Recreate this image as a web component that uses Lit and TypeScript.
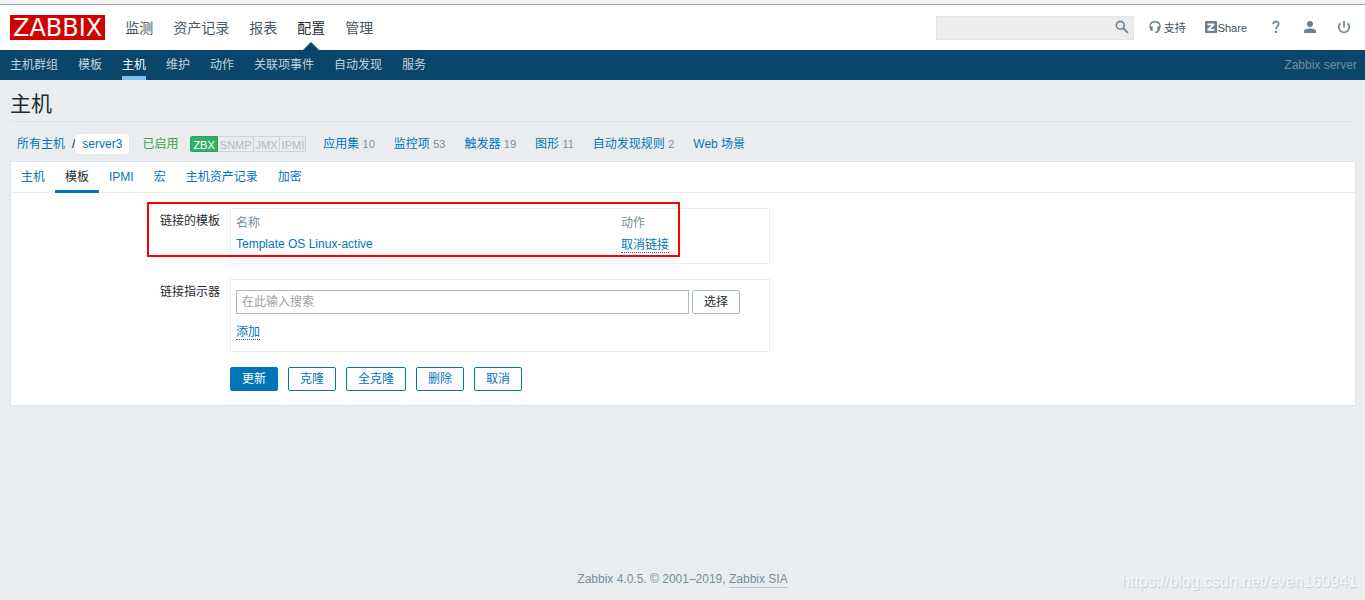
import { LitElement, html, css, svg, nothing } from 'lit';
import { customElement } from 'lit/decorators.js';
import { classMap } from 'lit/directives/class-map.js';

const MENU = ['监测', '资产记录', '报表', '配置', '管理'];
const SUBMENU = ['主机群组', '模板', '主机', '维护', '动作', '关联项事件', '自动发现', '服务'];
const TABS = ['主机', '模板', 'IPMI', '宏', '主机资产记录', '加密'];
const INTERFACES = ['ZBX', 'SNMP', 'JMX', 'IPMI'];
const ENTITIES: { label: string; count?: number }[] = [
  { label: '应用集', count: 10 },
  { label: '监控项', count: 53 },
  { label: '触发器', count: 19 },
  { label: '图形', count: 11 },
  { label: '自动发现规则', count: 2 },
  { label: 'Web 场景' },
];
const ACTIONS = ['更新', '克隆', '全克隆', '删除', '取消'];

const icon = (size: number, body: unknown) => html`
  <svg width=${size} height=${size} viewBox="0 0 14 14" aria-hidden="true">${body}</svg>
`;

const searchIcon = icon(14, svg`
  <circle cx="5.3" cy="5.3" r="3.9" fill="none" stroke="currentColor" stroke-width="1.6"/>
  <path d="M8.2 8.2 L12.8 12.8" stroke="currentColor" stroke-width="1.9"/>`);
const supportIcon = icon(14, svg`
  <path d="M3.2 9.6 C0.6 6.4 2 1.7 7 1.7 C12 1.7 13.4 6.4 10.8 9.6" fill="none" stroke="currentColor" stroke-width="1.4"/>
  <path d="M2 6.6 H4.6 V11 H3.6 L2 9.2 Z M12 6.6 H9.4 V11 H10.4 L12 9.2 Z" fill="currentColor"/>
  <path d="M10.8 10 C10.4 11.8 9.4 12.4 7.2 12.4" fill="none" stroke="currentColor" stroke-width="1.3"/>`);
const shareIcon = icon(12, svg`
  <rect width="14" height="14" rx="1" fill="currentColor"/>
  <path d="M3 2.8 H11 V4.8 L6.4 9.2 H11.2 V11.3 H2.9 V9.3 L7.5 4.9 H3 Z" fill="#fff"/>`);
const helpIcon = icon(14, svg`
  <path d="M4.2 4.2 C4.3 0.7 9.7 0.7 9.7 4 C9.7 6.2 7 6.4 7 9" fill="none" stroke="currentColor" stroke-width="1.7"/>
  <rect x="6" y="10.8" width="2" height="2.2" fill="currentColor"/>`);
const userIcon = icon(14, svg`
  <circle cx="7" cy="4" r="3" fill="currentColor"/>
  <path d="M1 13 V11.4 C1 9.4 4 8.6 7 8.6 C10 8.6 13 9.4 13 11.4 V13 Z" fill="currentColor"/>`);
const powerIcon = icon(14, svg`
  <path d="M7 1 V7.4" stroke="currentColor" stroke-width="1.7"/>
  <path d="M3.4 3.1 A5.3 5.3 0 1 0 10.6 3.1" fill="none" stroke="currentColor" stroke-width="1.6"/>`);

@customElement('app-root')
export class AppRoot extends LitElement {
  static styles = css`
    :host {
      display: flex;
      flex-direction: column;
      position: relative;
      box-sizing: border-box;
      min-height: 100vh;
      background: #e9edf0;
      color: #1f2c33;
      font: 12px/16px "Liberation Sans", "Noto Sans CJK SC", sans-serif;
    }
    * { box-sizing: border-box; }
    a { color: #0275b8; text-decoration: none; white-space: nowrap; }
    svg { display: block; flex: none; }
    button, input { font: inherit; margin: 0; }

    .edge { height: 5px; background: #f2f2f2; border-bottom: 1px solid #a4a4a4; }

    .top {
      display: flex;
      align-items: center;
      height: 45px;
      padding: 0 14px 0 10px;
      background: #fff;
    }
    .logo {
      height: 25px;
      padding: 0 3px;
      background: #d40000;
      color: #fff;
      font: 24px/27px "DejaVu Sans", sans-serif;
    }
    .menu { display: flex; align-self: stretch; gap: 20px; margin-left: 20px; }
    .menu a {
      display: flex;
      align-items: center;
      position: relative;
      color: #4a5862;
      font-size: 14px;
    }
    .menu .active { color: #1f2c33; }
    .menu .active::after {
      content: "";
      position: absolute;
      bottom: 0;
      left: calc(50% - 8px);
      border: 8px solid transparent;
      border-top: 0;
      border-bottom-color: #0a466a;
    }
    .tools { display: flex; align-items: center; margin-left: auto; color: #6b8090; }
    .tools a { display: flex; align-items: center; color: #6b8090; font-size: 11px; }
    .tools svg { margin-bottom: 2px; }
    .tools span { color: #425059; }
    .search {
      display: flex;
      width: 198px;
      height: 24px;
      margin-right: 14px;
      border: 1px solid #e2e5e7;
      background: #ececec;
    }
    .search input { flex: 1; min-width: 0; border: 0; padding: 0 5px; background: none; outline: 0; }
    .search button { width: 20px; padding: 0 0 0 2px; border: 0; background: none; color: #6b8090; }
    .support { gap: 2px; margin-right: 19px; }
    .share { gap: 1px; margin-right: 22px; }
    .glyphs { display: flex; gap: 20px; }

    .sub {
      display: flex;
      gap: 20px;
      height: 30px;
      padding: 0 8px 0 10px;
      background: #0a466a;
      line-height: 31px;
    }
    .sub a { height: 30px; color: #c3d3dd; }
    .sub .active { color: #fff; border-bottom: 4px solid #7ec0ee; }
    .server { margin-left: auto; color: #768d99; }

    main { padding: 0 9px 0 10px; }
    h1 {
      margin: 0;
      height: 42px;
      border-bottom: 1px solid #dfe4e7;
      font-size: 21px;
      font-weight: 400;
      line-height: 48px;
    }
    .crumbs { display: flex; align-items: center; height: 20px; margin: 12px 7px 7px; }
    .slash { margin-left: 7px; }
    .current { padding: 0 7px; border-radius: 2px; background: #fff; line-height: 20px; box-shadow: 0 0 1px #c0c8cc; }
    .enabled { margin: 0 12px 0 13px; color: #429e47; }
    .interfaces { display: flex; margin-right: 17px; font-size: 11px; line-height: 17px; }
    .interfaces span {
      height: 16px;
      padding: 0 1px 0 2px;
      border: 1px solid #ccd5d9;
      border-left-width: 0;
      color: #acbbc2;
    }
    .interfaces span:last-child { border-radius: 0 2px 2px 0; }
    .interfaces .on { padding: 0 2px; border: 1px solid #2f9f5e; border-radius: 2px 0 0 2px; background: #34af67; color: #fff; }
    .entities { display: flex; gap: 19px; color: #768d99; }
    .entities span { font-size: 11px; }

    .panel { border: 1px solid #dfe4e7; background: #fff; }
    .tabs { display: flex; height: 31px; border-bottom: 1px solid #ebeef0; }
    .tabs a { height: 31px; padding: 0 10px; line-height: 31px; }
    .tabs .active { color: #1f2c33; border-bottom: 3px solid #0275b8; }

    .form {
      display: grid;
      grid-template-columns: 209px minmax(0, 540px);
      column-gap: 10px;
      row-gap: 15px;
      position: relative;
      padding: 15px 0 14px;
    }
    .name { padding-top: 5px; text-align: right; }
    .box { border: 1px solid #ebeef0; padding: 5px; }
    .linked { min-height: 56px; }
    table { width: 100%; border-collapse: collapse; table-layout: fixed; }
    th, td { height: 22px; padding: 0; text-align: left; vertical-align: top; }
    th { color: #768d99; font-weight: 400; line-height: 18px; }
    .col-action { width: 143px; }
    .dotted { display: inline-block; height: 17px; border-bottom: 1px dotted #0275b8; line-height: 18px; }
    .picker { display: flex; gap: 3px; margin: 5px 24px 9px 0; }
    .picker input {
      flex: 1;
      min-width: 0;
      height: 24px;
      padding: 0 5px;
      border: 1px solid #acbbc2;
      background: #fff;
    }
    .picker input::placeholder { color: #a0a0a0; opacity: 1; }
    .suggest { min-height: 73px; }
    .btn {
      height: 24px;
      padding: 0 11px;
      border: 1px solid #0275b8;
      border-radius: 2px;
      background: #fff;
      color: #0275b8;
      line-height: 22px;
    }
    .primary { background: #0275b8; color: #fff; }
    .plain { border-color: #acbbc2; color: #1f2c33; }
    .actions { display: flex; gap: 10px; grid-column: 2; }
    .mark {
      position: absolute;
      top: 9px;
      left: 136px;
      width: 533px;
      height: 55px;
      border: 2px solid #f00;
      pointer-events: none;
    }

    footer { margin-top: auto; padding-bottom: 12px; color: #768d99; text-align: center; }
    footer a { display: inline-block; border-bottom: 1px solid #b9c5cb; color: #768d99; }
    .watermark {
      position: absolute;
      right: 8px;
      bottom: 8px;
      color: #f4f6f8;
      font-size: 16px;
      line-height: 20px;
      text-shadow: 1px 1px 1px #c6cacd;
    }
  `;

  private links(items: string[], active: string) {
    return items.map(
      (item) => html`<a href="#" class=${classMap({ active: item === active })}>${item}</a>`,
    );
  }

  render() {
    return html`
      <div class="edge"></div>
      <header class="top">
        <div class="logo">ZABBIX</div>
        <nav class="menu">${this.links(MENU, '配置')}</nav>
        <div class="tools">
          <form class="search">
            <input type="text" aria-label="搜索" />
            <button type="button" aria-label="搜索">${searchIcon}</button>
          </form>
          <a href="#" class="support">${supportIcon}<span>支持</span></a>
          <a href="#" class="share">${shareIcon}<span>Share</span></a>
          <div class="glyphs">
            <a href="#" aria-label="帮助">${helpIcon}</a>
            <a href="#" aria-label="用户">${userIcon}</a>
            <a href="#" aria-label="退出">${powerIcon}</a>
          </div>
        </div>
      </header>
      <nav class="sub">
        ${this.links(SUBMENU, '主机')}
        <span class="server">Zabbix server</span>
      </nav>

      <main>
        <h1>主机</h1>
        <div class="crumbs">
          <a href="#">所有主机</a>
          <span class="slash">/</span>
          <a href="#" class="current">server3</a>
          <span class="enabled">已启用</span>
          <div class="interfaces">
            ${INTERFACES.map((name) => html`<span class=${classMap({ on: name === 'ZBX' })}>${name}</span>`)}
          </div>
          <div class="entities">
            ${ENTITIES.map(
              (e) => html`<div><a href="#">${e.label}</a>${e.count === undefined ? nothing : html` <span>${e.count}</span>`}</div>`,
            )}
          </div>
        </div>

        <section class="panel">
          <nav class="tabs">${this.links(TABS, '模板')}</nav>
          <form class="form">
            <div class="name">链接的模板</div>
            <div class="box linked">
              <table>
                <thead>
                  <tr><th>名称</th><th class="col-action">动作</th></tr>
                </thead>
                <tbody>
                  <tr>
                    <td><a href="#">Template OS Linux-active</a></td>
                    <td><a href="#" class="dotted">取消链接</a></td>
                  </tr>
                </tbody>
              </table>
            </div>
            <label class="name" for="template">链接指示器</label>
            <div class="box suggest">
              <div class="picker">
                <input id="template" type="text" placeholder="在此输入搜索" />
                <button type="button" class="btn plain">选择</button>
              </div>
              <a href="#" class="dotted">添加</a>
            </div>
            <div class="actions">
              ${ACTIONS.map(
                (name, i) => html`<button type="button" class=${classMap({ btn: true, primary: i === 0 })}>${name}</button>`,
              )}
            </div>
            <div class="mark"></div>
          </form>
        </section>
      </main>

      <footer>Zabbix 4.0.5. © 2001–2019, <a href="#">Zabbix SIA</a></footer>
      <div class="watermark">https://blog.csdn.net/even160941</div>
    `;
  }
}
